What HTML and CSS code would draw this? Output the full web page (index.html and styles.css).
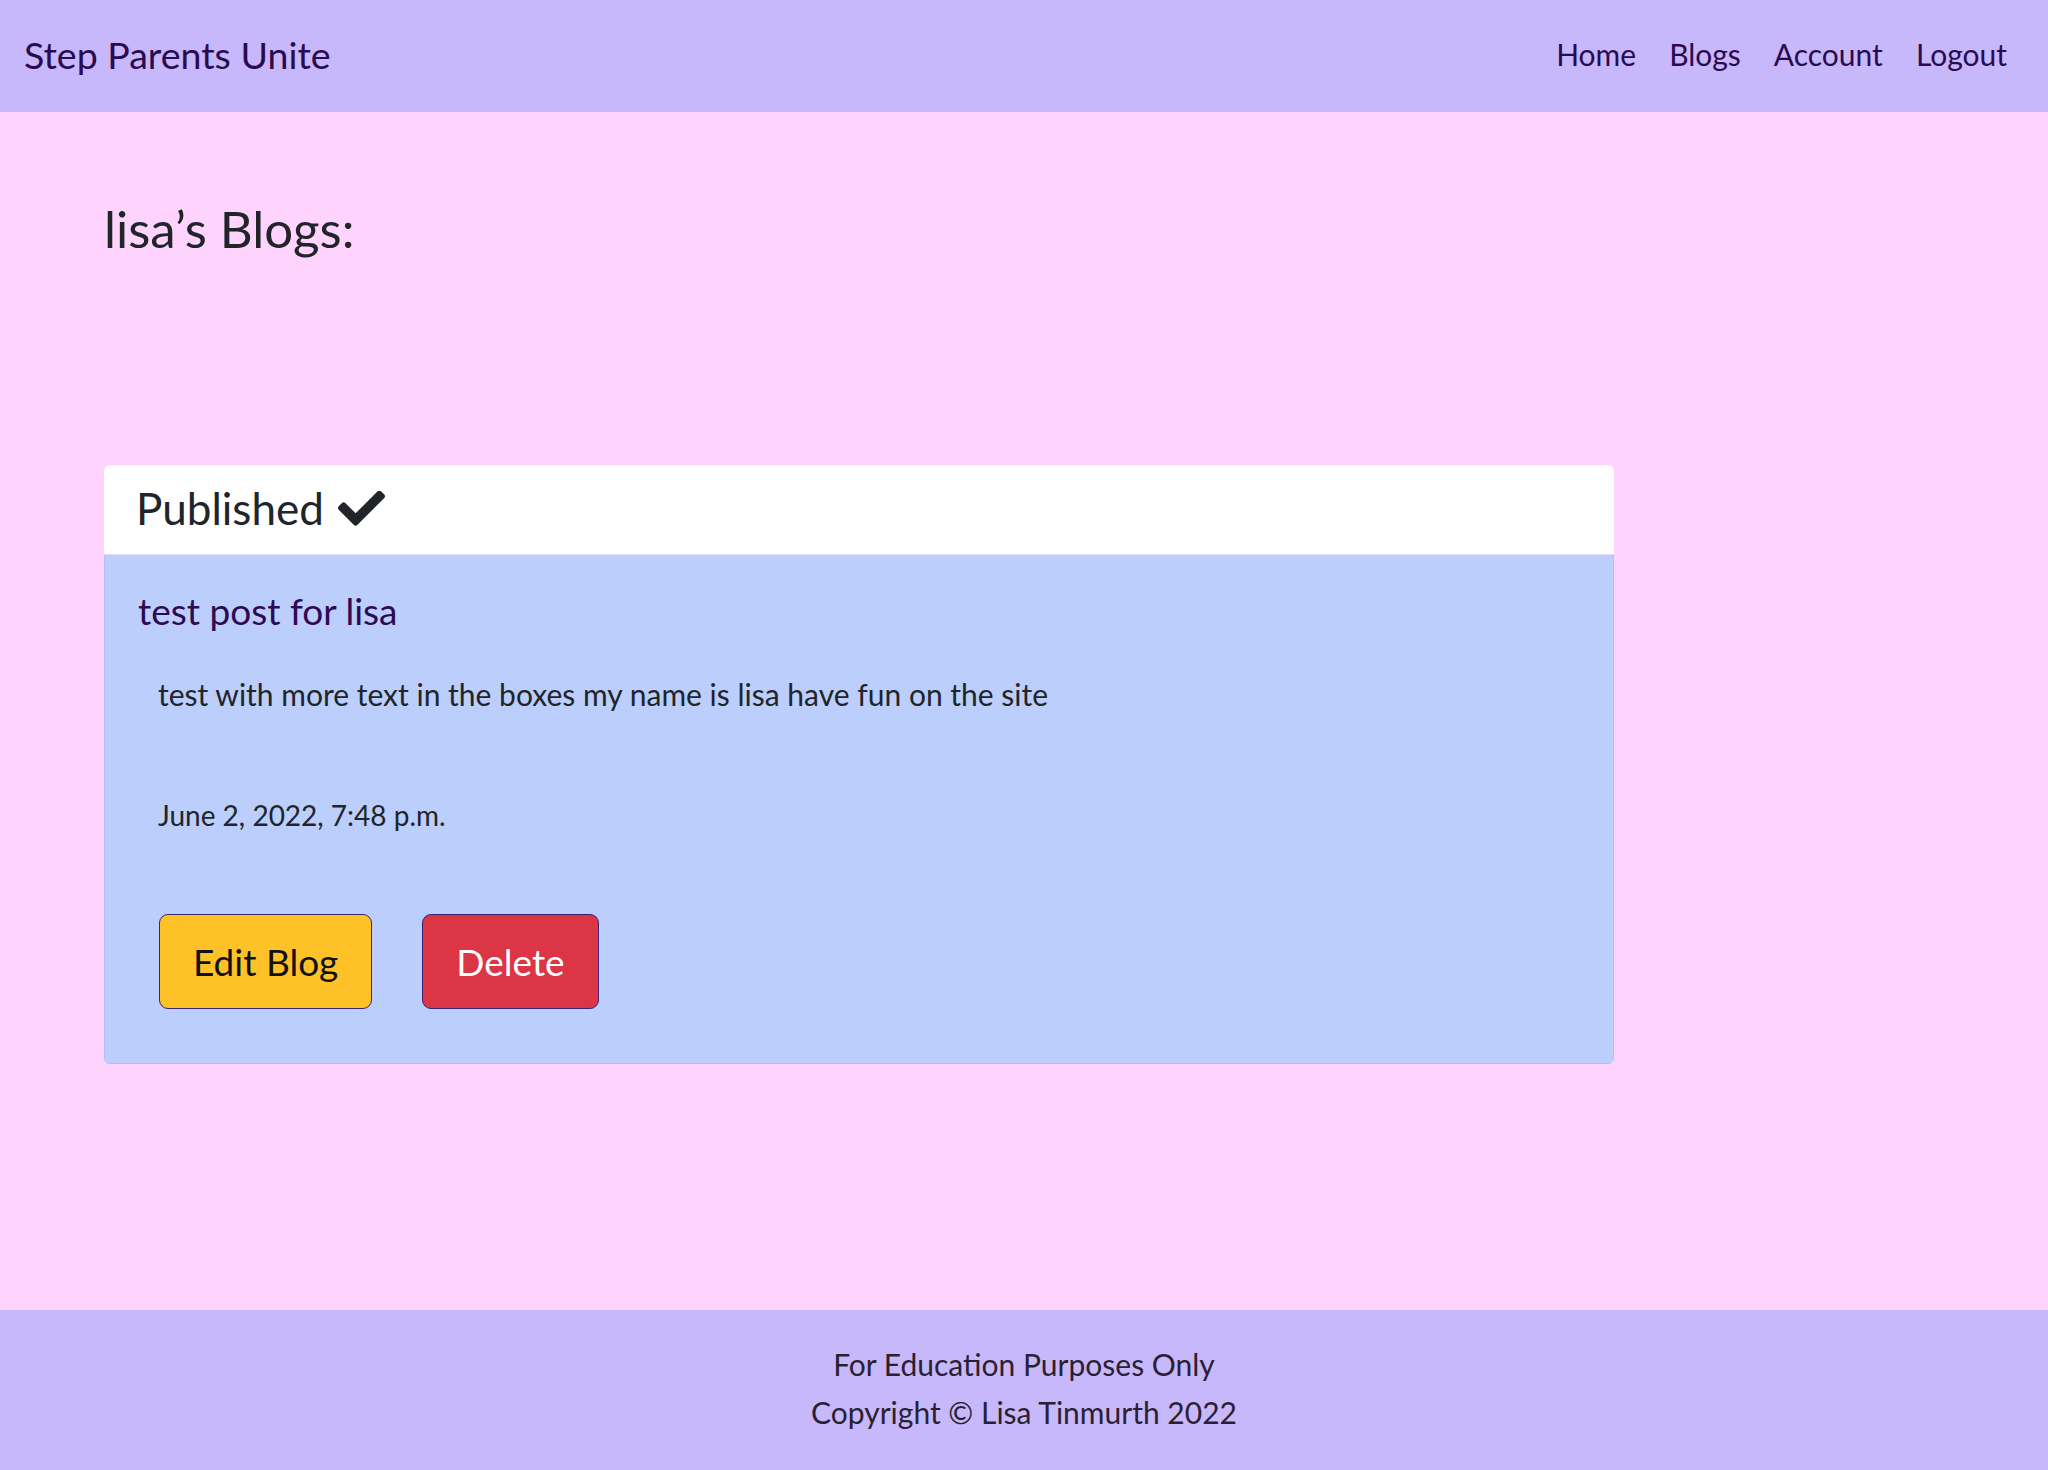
FILE: index.html
```html
<!DOCTYPE html>
<html lang="en">
<head>
<meta charset="utf-8">
<title>Step Parents Unite</title>
<link rel="stylesheet" href="styles.css">
</head>
<body>
<header class="navbar">
  <a class="brand" href="#">Step Parents Unite</a>
  <nav class="nav-links">
    <a href="#">Home</a>
    <a href="#">Blogs</a>
    <a href="#">Account</a>
    <a href="#">Logout</a>
  </nav>
</header>
<main class="main">
  <h1 class="page-title">lisa’s Blogs:</h1>
  <section class="card">
    <div class="card-header">
      <span>Published</span>
      <svg class="check" viewBox="0 72 512 376" aria-hidden="true"><path d="M173.898 439.404l-166.4-166.4c-9.997-9.997-9.997-26.206 0-36.204l36.203-36.204c9.997-9.998 26.207-9.998 36.204 0L192 312.69 432.095 72.596c9.997-9.997 26.207-9.997 36.204 0l36.203 36.204c9.997 9.997 9.997 26.206 0 36.204l-294.4 294.401c-9.998 9.997-26.207 9.997-36.204-.001z"/></svg>
    </div>
    <div class="card-body">
      <h2 class="post-title">test post for lisa</h2>
      <p class="post-text">test with more text in the boxes my name is lisa have fun on the site</p>
      <p class="post-date">June 2, 2022, 7:48 p.m.</p>
      <div class="actions">
        <a class="btn btn-warning" href="#">Edit Blog</a>
        <a class="btn btn-danger" href="#">Delete</a>
      </div>
    </div>
  </section>
</main>
<footer class="footer">
  <p>For Education Purposes Only</p>
  <p>Copyright © Lisa Tinmurth 2022</p>
</footer>
</body>
</html>
```
FILE: styles.css
```css
html, body {
  margin: 0;
  padding: 0;
}
body {
  min-height: 100vh;
  display: flex;
  flex-direction: column;
  background: #fed4fe;
  font-family: Lato, "Open Sans", sans-serif;
  color: #212529;
}
a {
  text-decoration: none;
  color: inherit;
}
.navbar {
  height: 112px;
  flex: none;
  display: flex;
  align-items: center;
  justify-content: space-between;
  padding: 0 41px 0 24px;
  background: #c7b7fb;
  color: #2b0a4f;
}
.brand {
  font-size: 37.5px;
  line-height: 1.2;
  margin-top: -3px;
}
.nav-links {
  display: flex;
  gap: 33px;
  font-size: 30px;
  line-height: 1.2;
  margin-top: -4px;
}
.main {
  flex: 1;
  padding: 0 0 0 104px;
}
.page-title {
  margin: 86px 0 0;
  font-size: 51px;
  font-weight: 400;
  line-height: 1.2;
}
.card {
  width: 1510px;
  margin-top: 206px;
  border-radius: 6px;
  overflow: hidden;
}
.card-header {
  display: flex;
  align-items: flex-end;
  gap: 14px;
  background: #ffffff;
  padding: 17px 36px 19px 32px;
  font-size: 44px;
  line-height: 1.2;
  border-bottom: 1px solid #e4dcf0;
}
.check {
  width: 47px;
  height: 35px;
  fill: #212529;
  margin-bottom: 9px;
}
.card-body {
  background: #bccefb;
  border: 1px solid #b3bdf5;
  border-top: none;
  padding: 34px 33px 54px;
}
.post-title {
  margin: 0;
  font-size: 37px;
  font-weight: 400;
  line-height: 1.2;
  color: #2e0a55;
}
.post-text {
  margin: 39px 0 0 20px;
  font-size: 30px;
  line-height: 1.5;
}
.post-date {
  margin: 77px 0 0 20px;
  font-size: 28px;
  line-height: 1.5;
}
.actions {
  display: flex;
  gap: 50px;
  margin: 78px 0 0 21px;
}
.btn {
  display: inline-flex;
  align-items: center;
  justify-content: center;
  box-sizing: border-box;
  height: 95px;
  padding: 0 33px;
  border: 1px solid #3a2470;
  border-radius: 9px;
  font-size: 37px;
  line-height: 1.2;
}
.btn-warning {
  background: #ffc128;
  color: #111111;
}
.btn-danger {
  background: #dc3545;
  color: #ffffff;
}
.footer {
  flex: none;
  background: #c7b7fb;
  color: #2a1f33;
  text-align: center;
  padding: 30px 0 34px;
  font-size: 30px;
  line-height: 48px;
}
.footer p {
  margin: 0;
}
```
